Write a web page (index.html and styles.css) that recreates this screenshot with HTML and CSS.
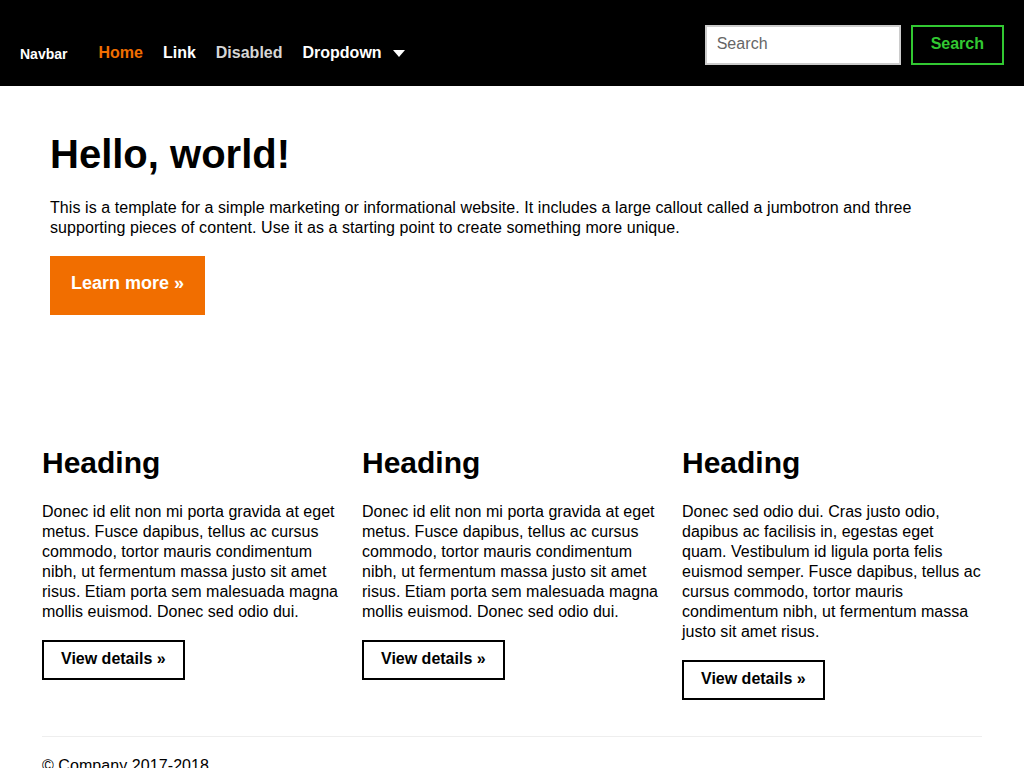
FILE: index.html
```html
<!DOCTYPE html>
<html lang="en">
<head>
<meta charset="utf-8">
<title>Jumbotron Template</title>
<link rel="stylesheet" href="styles.css">
</head>
<body>
<nav class="navbar">
  <a class="brand" href="#">Navbar</a>
  <ul class="nav">
    <li><a class="nav-link active" href="#">Home</a></li>
    <li><a class="nav-link" href="#">Link</a></li>
    <li><a class="nav-link disabled" href="#">Disabled</a></li>
    <li><a class="nav-link dropdown" href="#">Dropdown<span class="caret"></span></a></li>
  </ul>
  <form class="search">
    <input class="search-input" type="text" placeholder="Search">
    <button class="search-btn" type="button">Search</button>
  </form>
</nav>

<main>
  <section class="jumbotron">
    <h1 class="display">Hello, world!</h1>
    <p class="lead">This is a template for a simple marketing or informational website. It includes a large callout called a jumbotron and three supporting pieces of content. Use it as a starting point to create something more unique.</p>
    <a class="btn-primary" href="#">Learn more »</a>
  </section>

  <div class="container">
    <div class="row">
      <div class="col">
        <h2 class="col-title">Heading</h2>
        <p class="col-text">Donec id elit non mi porta gravida at eget metus. Fusce dapibus, tellus ac cursus commodo, tortor mauris condimentum nibh, ut fermentum massa justo sit amet risus. Etiam porta sem malesuada magna mollis euismod. Donec sed odio dui.</p>
        <a class="btn-outline" href="#">View details »</a>
      </div>
      <div class="col">
        <h2 class="col-title">Heading</h2>
        <p class="col-text">Donec id elit non mi porta gravida at eget metus. Fusce dapibus, tellus ac cursus commodo, tortor mauris condimentum nibh, ut fermentum massa justo sit amet risus. Etiam porta sem malesuada magna mollis euismod. Donec sed odio dui.</p>
        <a class="btn-outline" href="#">View details »</a>
      </div>
      <div class="col">
        <h2 class="col-title">Heading</h2>
        <p class="col-text">Donec sed odio dui. Cras justo odio, dapibus ac facilisis in, egestas eget quam. Vestibulum id ligula porta felis euismod semper. Fusce dapibus, tellus ac cursus commodo, tortor mauris condimentum nibh, ut fermentum massa justo sit amet risus.</p>
        <a class="btn-outline" href="#">View details »</a>
      </div>
    </div>
    <hr class="divider">
    <footer class="footer">
      <p>© Company 2017-2018</p>
    </footer>
  </div>
</main>
</body>
</html>
```

FILE: styles.css
```css
* {
  box-sizing: border-box;
}

html, body {
  margin: 0;
  padding: 0;
}

body {
  font-family: "Liberation Sans", Arial, Helvetica, sans-serif;
  font-size: 16px;
  line-height: 20px;
  color: #000;
  background: #fff;
}

a {
  text-decoration: none;
}

/* Navbar */
.navbar {
  display: flex;
  align-items: flex-start;
  height: 86px;
  padding: 25px 20px 0 20px;
  background: #000;
}

.brand {
  margin-top: 19px;
  margin-right: 21px;
  font-size: 14px;
  font-weight: 700;
  line-height: 20px;
  color: #fff;
}

.nav {
  display: flex;
  margin: 18px 0 0 0;
  padding: 0;
  list-style: none;
}

.nav-link {
  display: flex;
  align-items: center;
  padding: 0 10px;
  font-size: 16px;
  font-weight: 700;
  line-height: 20px;
  color: #fff;
}

.nav-link.active {
  color: #f16e00;
}

.nav-link.disabled {
  color: #d6d6d6;
}

.caret {
  display: inline-block;
  width: 0;
  height: 0;
  margin-left: 11px;
  border-left: 6.5px solid transparent;
  border-right: 6.5px solid transparent;
  border-top: 7px solid #fff;
}

.search {
  display: flex;
  margin: 0 0 0 auto;
}

.search-input {
  width: 196px;
  height: 40px;
  padding: 0 10px 3px 10px;
  border: 2px solid #ccc;
  background: #fff;
  font-family: inherit;
  font-size: 16px;
  letter-spacing: 0.07px;
  color: #000;
  outline: none;
}

.search-input::placeholder {
  color: #666;
}

.search-btn {
  height: 40px;
  margin-left: 10px;
  padding: 0 18px 3px 18px;
  border: 2px solid #32c832;
  background: #000;
  color: #32c832;
  font-family: inherit;
  font-size: 16px;
  font-weight: 700;
  line-height: 20px;
}

/* Jumbotron */
.jumbotron {
  height: 360px;
  padding: 46px 50px 0 50px;
}

.display {
  margin: 0 0 22px 0;
  font-size: 40px;
  line-height: 44px;
  font-weight: 700;
}

.lead {
  margin: 0 0 18px 0;
  font-size: 16px;
  line-height: 20px;
  letter-spacing: 0.07px;
}

.btn-primary {
  display: inline-block;
  padding: 14px 19px 18px 19px;
  border: 2px solid #f16e00;
  background: #f16e00;
  color: #fff;
  font-size: 18px;
  font-weight: 700;
  line-height: 23px;
}

/* Columns */
.container {
  width: 960px;
  margin: 0 auto;
}

.row {
  display: flex;
}

.col {
  width: 320px;
  padding: 0 10px;
}

.col-title {
  margin: 0 0 23px 0;
  font-size: 30px;
  line-height: 33px;
  font-weight: 700;
}

.col-text {
  margin: 0 0 18px 0;
  letter-spacing: 0.02px;
}

.btn-outline {
  display: inline-block;
  padding: 7px 17px 9px 17px;
  border: 2px solid #000;
  color: #000;
  font-size: 16px;
  font-weight: 700;
  line-height: 20px;
}

.divider {
  margin: 36px 10px 0 10px;
  border: 0;
  border-top: 1px solid #eee;
}

.footer {
  padding: 0 10px;
  letter-spacing: 0.07px;
}

.footer p {
  margin: 19px 0 0 0;
}
```
